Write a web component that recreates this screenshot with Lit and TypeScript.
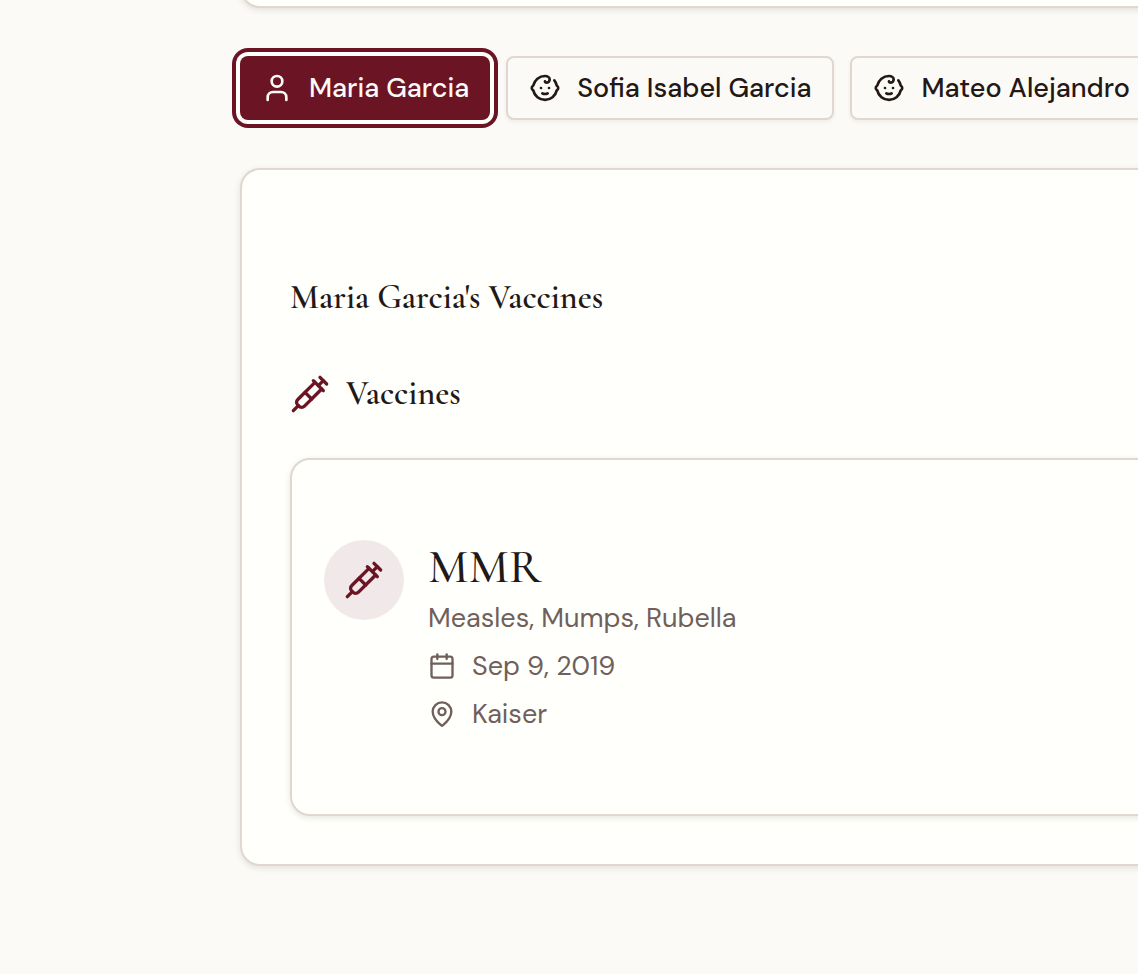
import { LitElement, html, css, svg } from "lit";
import { customElement, property, state } from "lit/decorators.js";

const shapes: Record<string, unknown> = {
  user: svg`<circle cx="12" cy="7" r="4"/><path d="M19 21v-2a4 4 0 0 0-4-4H9a4 4 0 0 0-4 4v2"/>`,
  baby: svg`<path d="M9 12h.01"/><path d="M15 12h.01"/><path d="M10 16c.5.3 1.2.5 2 .5s1.5-.2 2-.5"/><path d="M19 6.3a9 9 0 0 1 1.8 3.9 2 2 0 0 1 0 3.6 9 9 0 0 1-17.6 0 2 2 0 0 1 0-3.6A9 9 0 0 1 12 3c2 0 3.5 1.1 3.5 2.5s-.9 2.5-2 2.5c-.8 0-1.5-.4-1.5-1"/>`,
  syringe: svg`<path d="m18 2 4 4"/><path d="m17 7 3-3"/><path d="M19 9 8.7 19.3c-1 1-2.5 1-3.4 0l-.6-.6c-1-1-1-2.5 0-3.4L15 5"/><path d="m9 11 4 4"/><path d="m5 19-3 3"/><path d="m14 4 6 6"/>`,
  calendar: svg`<path d="M8 2v4"/><path d="M16 2v4"/><rect width="18" height="18" x="3" y="4" rx="2"/><path d="M3 10h18"/>`,
  pin: svg`<path d="M20 10c0 4.993-5.539 10.193-7.399 11.799a1 1 0 0 1-1.202 0C9.539 20.193 4 14.993 4 10a8 8 0 0 1 16 0"/><circle cx="12" cy="10" r="3"/>`,
};

@customElement("line-icon")
export class LineIcon extends LitElement {
  @property() name = "";

  static styles = css`
    :host {
      display: block;
      flex: none;
      width: 32px;
      height: 32px;
    }
    .glyph {
      display: block;
      width: 100%;
      height: 100%;
      fill: none;
      stroke: currentColor;
      stroke-width: 2;
      stroke-linecap: round;
      stroke-linejoin: round;
    }
  `;

  render() {
    return html`<svg class="glyph" viewBox="0 0 24 24" aria-hidden="true">${shapes[this.name]}</svg>`;
  }
}

interface Person {
  name: string;
  icon: string;
}

const people: Person[] = [
  { name: "Maria Garcia", icon: "user" },
  { name: "Sofia Isabel Garcia", icon: "baby" },
  { name: "Mateo Alejandro", icon: "baby" },
];

@customElement("app-root")
export class AppRoot extends LitElement {
  @state() private selected = 0;

  static styles = css`
    :host {
      --maroon: #6b1424;
      --ink: #231815;
      --muted: #705f5a;
      --line: #e0d8d0;
      --page: #fbfaf6;
      --card: #fffffc;
      --serif: "Cormorant Garamond", "Liberation Serif", serif;
      display: flow-root;
      box-sizing: border-box;
      min-height: 100vh;
      overflow: hidden;
      background: var(--page);
      color: var(--ink);
      font: 400 27px/48px "DM Sans", Roboto, sans-serif;
    }
    .page {
      display: flex;
      flex-direction: column;
      gap: 48px;
      margin: -40px -96px 0 240px;
    }
    .card {
      box-sizing: border-box;
      border: 2px solid var(--line);
      border-radius: 20px;
      background: var(--card);
      box-shadow: 0 2px 6px rgba(60, 40, 20, 0.12);
    }
    .summary {
      height: 48px;
    }
    .tabs {
      display: flex;
      gap: 16px;
    }
    .tab {
      display: flex;
      flex: none;
      align-items: center;
      gap: 16px;
      box-sizing: border-box;
      height: 64px;
      margin: 0;
      padding: 0 21px;
      border: 2px solid var(--line);
      border-radius: 8px;
      background: var(--page);
      box-shadow: 0 2px 4px rgba(60, 40, 20, 0.06);
      color: inherit;
      font: inherit;
      font-weight: 500;
      white-space: nowrap;
      cursor: pointer;
    }
    .tab.selected {
      border: 0;
      background: var(--maroon);
      color: var(--page);
      box-shadow: 0 0 0 4px var(--card), 0 0 0 8px var(--maroon);
      outline: none;
    }
    .panel {
      padding: 108px 48px 48px;
    }
    .heading {
      margin: 0;
      font: 600 34px/40px var(--serif);
    }
    .group {
      display: flex;
      align-items: center;
      gap: 16px;
      margin: 56px 0 44px;
    }
    .accent {
      width: 40px;
      height: 40px;
      color: var(--maroon);
    }
    .vaccine {
      display: flex;
      align-items: flex-start;
      gap: 24px;
      padding: 80px 32px 76px;
    }
    .badge {
      display: grid;
      flex: none;
      place-items: center;
      width: 80px;
      height: 80px;
      border-radius: 50%;
      background: #f1e9e9;
    }
    .title {
      margin: 0;
      font: 500 48px/54px var(--serif);
    }
    .detail {
      display: flex;
      align-items: center;
      gap: 16px;
      margin: 0;
      color: var(--muted);
    }
    .small {
      width: 28px;
      height: 28px;
    }
  `;

  render() {
    const person = people[this.selected];
    return html`
      <main class="page">
        <section class="card summary"></section>
        <nav class="tabs" aria-label="Family members">
          ${people.map(
            (p, i) => html`<button
              type="button"
              class="tab ${i === this.selected ? "selected" : ""}"
              aria-pressed=${i === this.selected}
              @click=${() => (this.selected = i)}
            >
              <line-icon name=${p.icon}></line-icon><span>${p.name}</span>
            </button>`
          )}
        </nav>
        <section class="card panel">
          <h2 class="heading">${person.name}'s Vaccines</h2>
          <div class="group">
            <line-icon class="accent" name="syringe"></line-icon>
            <h3 class="heading">Vaccines</h3>
          </div>
          <article class="card vaccine">
            <div class="badge"><line-icon class="accent" name="syringe"></line-icon></div>
            <div>
              <h4 class="title">MMR</h4>
              <p class="detail">Measles, Mumps, Rubella</p>
              <p class="detail">
                <line-icon class="small" name="calendar"></line-icon><span>Sep 9, 2019</span>
              </p>
              <p class="detail">
                <line-icon class="small" name="pin"></line-icon><span>Kaiser</span>
              </p>
            </div>
          </article>
        </section>
      </main>
    `;
  }
}
